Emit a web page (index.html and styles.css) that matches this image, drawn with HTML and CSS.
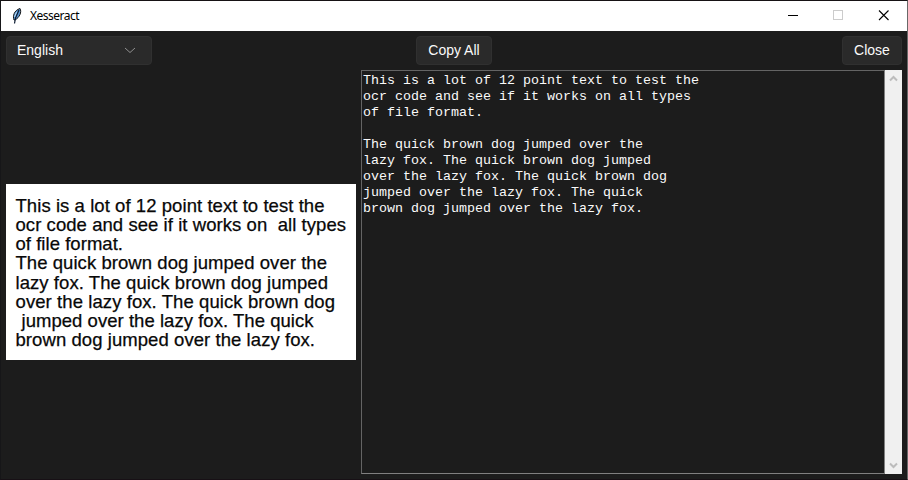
FILE: index.html
```html
<!DOCTYPE html>
<html lang="en">
<head>
<meta charset="utf-8">
<title>Xesseract</title>
<link rel="stylesheet" href="styles.css">
</head>
<body>
<div class="window">
  <header class="titlebar">
    <svg class="feather" width="12" height="18" viewBox="0 0 12 18">
      <path d="M3 13C1.5 9 3 3.5 9 1.5C11 5 8.5 10.500 4 13Z" fill="#5b96d2" stroke="#161616" stroke-width="1"/>
      <path d="M8 3L4.500 11L3.500 16.500" fill="none" stroke="#0b1b33" stroke-width="1.2"/>
      <path d="M5.500 5L3.500 10" stroke="#b9dcf5" stroke-width="1"/>
    </svg>
    <span class="name">Xesseract</span>
    <svg class="controls" width="138" height="30" viewBox="0 0 138 30" shape-rendering="crispEdges" fill="none">
      <path d="M18 14.5H28" stroke="#000"/>
      <rect x="63.5" y="9.5" width="9" height="9" stroke="#ccc"/>
      <path d="M109 9.5L118.5 19M118.5 9.5L109 19" stroke="#000" stroke-width="1.1" shape-rendering="auto"/>
    </svg>
  </header>
  <div class="toolbar">
    <div class="button language"><span>English</span>
      <svg width="12" height="7" viewBox="0 0 12 7"><path d="M1 1L6 5.5L11 1" fill="none" stroke="#909090"/></svg>
    </div>
    <div class="button copy">Copy All</div>
    <div class="button close">Close</div>
  </div>
  <main class="content">
    <svg class="preview" width="350" height="176" viewBox="0 0 350 176">
      <rect width="350" height="176" fill="#fff"/>
      <text x="9.5" y="27.5" textLength="309">This is a lot of 12 point text to test the</text>
      <text x="9.5" y="46.8" textLength="330.5" xml:space="preserve">ocr code and see if it works on  all types</text>
      <text x="9.5" y="66" textLength="107.5">of file format.</text>
      <text x="9.5" y="85.3" textLength="311.5">The quick brown dog jumped over the</text>
      <text x="9.5" y="104.6" textLength="312.5">lazy fox. The quick brown dog jumped</text>
      <text x="9.5" y="123.8" textLength="319.5">over the lazy fox. The quick brown dog</text>
      <text x="15.5" y="143" textLength="292">jumped over the lazy fox. The quick</text>
      <text x="9.5" y="162.3" textLength="299.5">brown dog jumped over the lazy fox.</text>
    </svg>
    <section class="editor">
      <pre class="output">This is a lot of 12 point text to test the
ocr code and see if it works on all types
of file format.

The quick brown dog jumped over the
lazy fox. The quick brown dog jumped
over the lazy fox. The quick brown dog
jumped over the lazy fox. The quick
brown dog jumped over the lazy fox.</pre>
      <div class="scrollbar">
        <svg width="9" height="7" viewBox="0 0 9 7"><path d="M1 5.5L4.5 2L8 5.5" fill="none" stroke="#bcbcbc" stroke-width="2"/></svg>
        <svg width="9" height="7" viewBox="0 0 9 7"><path d="M1 1.5L4.5 5L8 1.5" fill="none" stroke="#bcbcbc" stroke-width="2"/></svg>
      </div>
    </section>
  </main>
</div>
</body>
</html>
```
FILE: styles.css
```css
* { box-sizing: border-box; }
body { margin: 0; background: #1c1c1c; }
.window {
  width: 908px;
  height: 480px;
  display: flex;
  flex-direction: column;
  border-top: 1px solid #161214;
  border-left: 1px solid #161618;
  border-right: 1px solid #686868;
  border-bottom: 1px solid #171015;
  background: #1c1c1c;
  overflow: hidden;
}
.titlebar {
  height: 30px;
  flex: none;
  display: flex;
  align-items: center;
  padding-left: 10px;
  background: #fff;
}
.feather { flex: none; margin-top: -1px; }
.name {
  margin-left: 7px;
  font: 12px/16px "Noto Sans", "Open Sans", sans-serif;
  letter-spacing: -0.5px;
  color: #000;
}
.controls { margin-left: auto; margin-right: -1px; }
.toolbar {
  height: 39px;
  flex: none;
  display: grid;
  grid-template-columns: 146px 1fr 60px;
  padding: 5px 5px 5px;
}
.button {
  height: 29px;
  display: flex;
  align-items: center;
  justify-content: center;
  padding-bottom: 1px;
  border: 1px solid #303030;
  border-radius: 4px;
  background: #2a2a2a;
  color: #fafafa;
  font: 14px/16px "Liberation Sans", Arial, sans-serif;
}
.language { justify-content: space-between; padding: 0 15px 1px 10px; }
.copy { width: 76px; margin-left: 264px; }
.content {
  height: 404px;
  display: grid;
  grid-template-columns: 350px 541px;
  column-gap: 5px;
  padding-left: 5px;
  align-items: center;
}
.preview text {
  font-family: "Liberation Sans", Arial, sans-serif;
  font-size: 18.5px;
  fill: #080808;
  stroke: #080808;
  stroke-width: 0.25px;
}
.editor { height: 404px; display: flex; }
.output {
  width: 524px;
  margin: 0;
  padding: 2px 1px 1px;
  border: 1px solid #646464;
  border-right-color: #808080;
  border-bottom-color: #808080;
  color: #fafafa;
  font: 13.333px/16px "Liberation Mono", "Courier New", monospace;
}
.scrollbar {
  width: 17px;
  display: flex;
  flex-direction: column;
  justify-content: space-between;
  align-items: center;
  padding: 5px 0 5px;
  background: #f0f0f0;
}
```
